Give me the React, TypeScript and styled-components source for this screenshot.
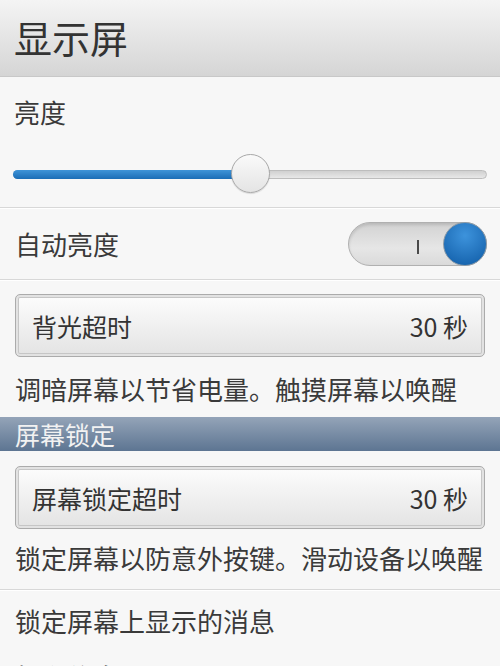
import React from 'react'
import styled, { createGlobalStyle } from 'styled-components'

const GlobalStyle = createGlobalStyle`
  html, body {
    margin: 0;
    padding: 0;
    background: #f7f7f7;
  }
  body {
    font-family: 'Noto Sans CJK SC', 'Noto Sans', sans-serif;
    color: #3a3a3a;
  }
`

const Page = styled.div`
  width: 500px;
  height: 666px;
  overflow: hidden;
  background: #f7f7f7;
`

const Header = styled.header`
  height: 77px;
  display: flex;
  align-items: center;
  padding: 0 14px 2px 14px;
  background: linear-gradient(#f4f4f4, #d5d5d5);
  border-bottom: 1px solid #c8c8c8;
  box-sizing: border-box;
`

const Title = styled.h1`
  margin: 0;
  font-size: 38px;
  font-weight: 400;
  line-height: 44px;
  color: #333;
`

const Section = styled.section`
  padding: 17px 13px 13px;
  border-bottom: 1px solid #d8d8d8;
  box-shadow: 0 1px 0 #ffffff;
`

const Label = styled.div`
  font-size: 26px;
  line-height: 36px;
  padding-left: 1px;
`

const SliderBox = styled.div`
  position: relative;
  height: 40px;
  margin-top: 24px;
  display: flex;
  align-items: center;
`

const Track = styled.div`
  position: relative;
  flex: 1;
  height: 9px;
  border-radius: 5px;
  background: linear-gradient(#d0d0d0, #e8e8e8);
  border: 1px solid #bdbdbd;
  box-sizing: border-box;
`

const Fill = styled.div`
  position: absolute;
  left: -1px;
  top: -1px;
  bottom: -1px;
  border-radius: 5px 0 0 5px;
  background: linear-gradient(#3f94d8, #1b6db6);
`

const Thumb = styled.div`
  position: absolute;
  top: 0;
  width: 39px;
  height: 39px;
  margin-left: -19px;
  border-radius: 50%;
  border: 1px solid #a8a8a8;
  box-sizing: border-box;
  background: linear-gradient(#fafafa, #e4e4e4);
  box-shadow: 0 1px 1px rgba(0, 0, 0, 0.12);
`

const Row = styled.div`
  height: 71px;
  display: flex;
  align-items: center;
  justify-content: space-between;
  padding: 0 13px 0 14px;
  border-bottom: 1px solid #d8d8d8;
  box-shadow: 0 1px 0 #ffffff;
`

const Toggle = styled.div`
  position: relative;
  width: 139px;
  height: 44px;
  border-radius: 22px;
  box-sizing: border-box;
  border: 1px solid #b0b0b0;
  background: linear-gradient(#d2d2d2, #e6e6e6 60%, #dadada);
  box-shadow: inset 0 2px 3px rgba(0, 0, 0, 0.12);
`

const ToggleMark = styled.span`
  position: absolute;
  left: 68px;
  top: 17px;
  width: 2px;
  height: 14px;
  background: #4a4a4a;
`

const Knob = styled.span`
  position: absolute;
  right: -1px;
  top: -1px;
  width: 44px;
  height: 44px;
  border-radius: 50%;
  box-sizing: border-box;
  border: 1px solid #8a9aa8;
  background: radial-gradient(circle at 50% 30%, #3d93dc, #1866b0 80%);
`

const Block = styled.div`
  padding: 14px 15px 0;
`

const PickButton = styled.div`
  height: 63px;
  display: flex;
  align-items: center;
  justify-content: space-between;
  padding: 0 16px 0 16px;
  box-sizing: border-box;
  border: 1px solid #ababab;
  border-radius: 5px;
  background: linear-gradient(#fdfdfd, #e3e3e3);
  box-shadow: inset 0 0 0 2px #e2e2e2, inset 0 0 0 3px #c6c6c6;
  font-size: 25px;
  color: #333;
`

const Note = styled.p<{ $gap: number }>`
  margin: ${p => p.$gap}px 0 0;
  font-size: 26px;
  line-height: 36px;
  white-space: nowrap;
`

const SectionBar = styled.div`
  margin-top: 10px;
  height: 34px;
  display: flex;
  align-items: center;
  padding: 0 15px;
  background: linear-gradient(#94a4b8, #5d7592);
  color: #f2f2f2;
  font-size: 25px;
`

const LockBlock = styled.div`
  padding: 15px 15px 13px;
  border-bottom: 1px solid #d8d8d8;
  box-shadow: 0 1px 0 #ffffff;
`

const ItemText = styled.div<{ $top: number }>`
  padding: ${p => p.$top}px 15px 0;
  font-size: 26px;
  line-height: 36px;
`

export default function App() {
  const brightness = 0.5
  return (
    <Page>
      <GlobalStyle />
      <Header>
        <Title>显示屏</Title>
      </Header>
      <Section>
        <Label>亮度</Label>
        <SliderBox>
          <Track>
            <Fill style={{ width: `${brightness * 100}%` }} />
          </Track>
          <Thumb style={{ left: `${brightness * 100}%` }} />
        </SliderBox>
      </Section>
      <Row>
        <Label>自动亮度</Label>
        <Toggle>
          <ToggleMark />
          <Knob />
        </Toggle>
      </Row>
      <Block>
        <PickButton>
          <span>背光超时</span>
          <span>30 秒</span>
        </PickButton>
        <Note $gap={14}>调暗屏幕以节省电量。触摸屏幕以唤醒</Note>
      </Block>
      <SectionBar>屏幕锁定</SectionBar>
      <LockBlock>
        <PickButton>
          <span>屏幕锁定超时</span>
          <span>30 秒</span>
        </PickButton>
        <Note $gap={11}>锁定屏幕以防意外按键。滑动设备以唤醒</Note>
      </LockBlock>
      <ItemText $top={13}>锁定屏幕上显示的消息</ItemText>
      <ItemText $top={20}>机主信息</ItemText>
    </Page>
  )
}
